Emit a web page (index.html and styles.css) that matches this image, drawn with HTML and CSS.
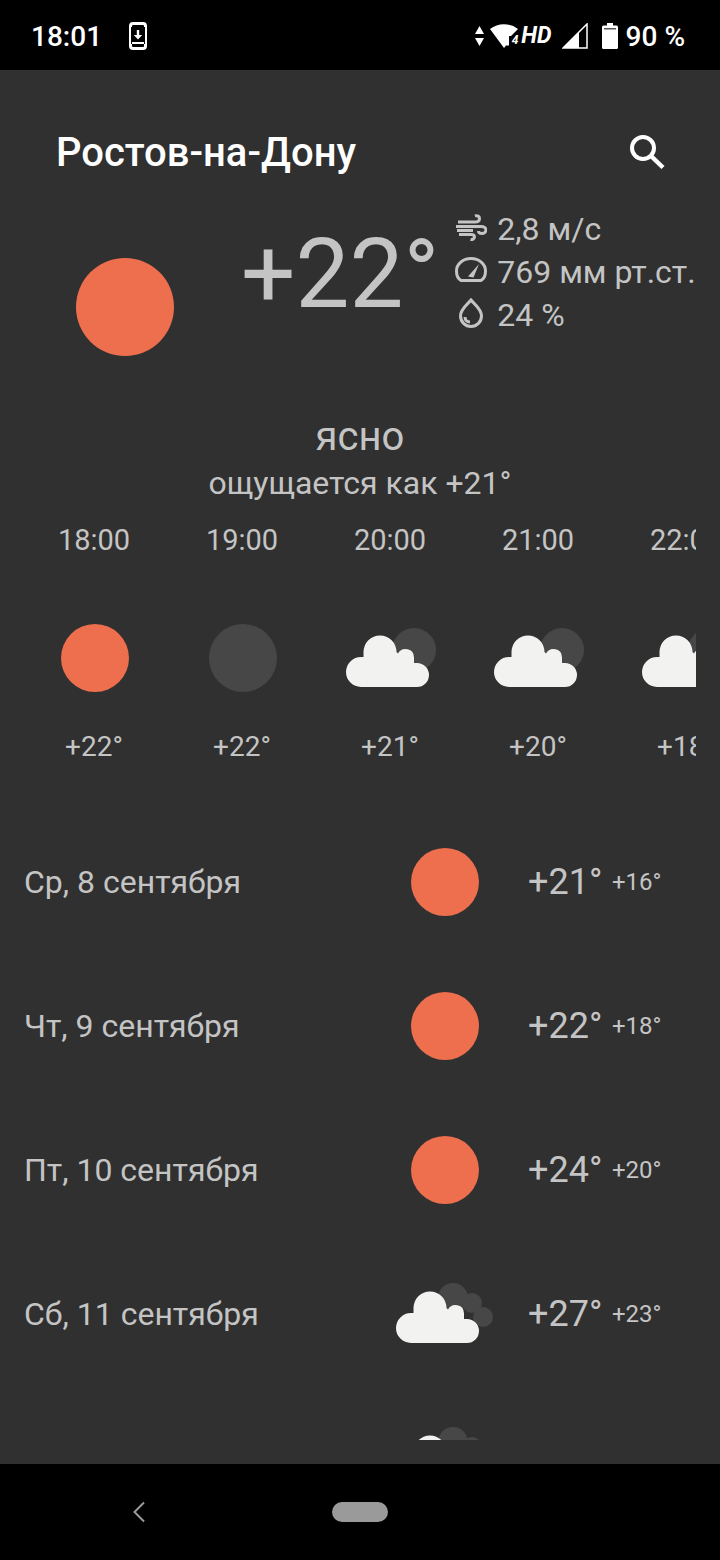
FILE: index.html
```html
<!DOCTYPE html>
<html lang="ru">
<head>
  <meta charset="UTF-8">
  <meta name="viewport" content="width=device-width, initial-scale=1.0">
  <title>Погода - Ростов-на-Дону</title>
  <link rel="stylesheet" href="styles.css">
</head>
<body>
  <!-- shared weather icons -->
  <svg class="defs" width="0" height="0">
    <defs>
      <path id="cloud" d="M19 77A15 15 0 0 1 19 47H21.500V42A16.500 16.500 0 0 1 54.500 42L56 43.500A8.500 8.500 0 0 1 72 47.500V53H75A12 12 0 0 1 75 77Z"/>
    </defs>
  </svg>

  <div id="status-bar">
    <span class="clock">18:01</span>
    <svg class="download-icon" width="18" height="28" viewBox="0 0 18 28">
      <rect x="1.500" y="1.500" width="15" height="25" rx="2.500" fill="none" stroke="#fff" stroke-width="3"/>
      <rect x="2" y="5" width="14" height="17" fill="#000"/>
      <rect x="3" y="20" width="12" height="2" fill="#fff"/>
      <path d="M7.800 8h2.400v5h3L9 17.500 4.800 13h3z" fill="#fff"/>
    </svg>
    <div class="status-right">
      <svg width="12" height="20" viewBox="0 0 12 20"><path d="M6.500 0L11 8H2zM2 12h9l-4.500 8z" fill="#fff"/></svg>
      <span class="wifi">
        <svg width="30" height="24" viewBox="0 0 30 24"><path d="M1 5C9 -1.500 21 -1.500 29 5L22 12H20V21.500H17L15 24z" fill="#fff"/></svg>
        <span class="wifi-num">4</span>
      </span>
      <span class="hd">HD</span>
      <svg class="signal-icon" width="26" height="26" viewBox="0 0 26 26">
        <path d="M25 1V25H1z" fill="none" stroke="#fff" stroke-width="1.500"/>
        <path d="M17 9V25H1z" fill="#fff"/>
      </svg>
      <svg class="battery-icon" width="16" height="26" viewBox="0 0 16 26">
        <path d="M5 0h6v2.500h3.500a1.500 1.500 0 0 1 1.500 1.500v20.500a1.500 1.500 0 0 1-1.500 1.500h-13A1.500 1.500 0 0 1 0 24.500V4a1.500 1.500 0 0 1 1.500-1.500H5z" fill="#fff"/>
        <rect x="2" y="5" width="12" height="1.500" fill="#555"/>
      </svg>
      <span class="battery-text">90 %</span>
    </div>
  </div>

  <div id="app">
    <header class="top">
      <h1>Ростов-на-Дону</h1>
      <svg class="search-icon" width="38" height="38" viewBox="0 0 38 38">
        <circle cx="15" cy="15" r="11" fill="none" stroke="#fff" stroke-width="4"/>
        <path d="M23 23L35 34.500" stroke="#fff" stroke-width="4.500" fill="none"/>
      </svg>
    </header>

    <section class="current">
      <div class="sun sun-big"></div>
      <div class="temp-now">+22°</div>
      <ul class="details">
        <li>
          <svg width="32" height="28" viewBox="0 0 32 28" class="detail-icon">
            <path d="M3 9h17c3 0 4.500-1.500 4.500-3.500S22.500 2 20 3"/>
            <path d="M1 13.500h25c3 0 5 1.500 5 3.500s-2 3.500-4 3.500-3.500-1-3.500-2.500"/>
            <path d="M2 17.500h16"/>
            <path d="M4 21.500h12c2 0 3.500 1 3.500 2.500s-2 3-4 2.500"/>
          </svg>
          2,8 м/с
        </li>
        <li>
          <svg width="32" height="26" viewBox="0 0 32 26" class="detail-icon">
            <path d="M6 23.500h20c2.500-1.500 4.500-5 4.500-9.500A14.500 12.500 0 0 0 1.500 14c0 4.500 2 8 4.500 9.500z"/>
            <path d="M13 19.500L24 7l-5.500 13.500z" class="needle"/>
          </svg>
          769 мм рт.ст.
        </li>
        <li>
          <svg width="32" height="30" viewBox="0 0 32 30" class="detail-icon">
            <path d="M16 2c4 5 10.500 9 10.500 16a10.500 10.500 0 0 1-21 0C5.500 11 12 7 16 2z"/>
            <path d="M10 19c0 3 2 5 5 5"/>
          </svg>
          24 %
        </li>
      </ul>
    </section>

    <div class="desc">ясно</div>
    <div class="feels">ощущается как +21°</div>

    <div class="hours">
      <div class="hour">
        <span class="hour-time">18:00</span>
        <div class="hour-icon"><div class="sun"></div></div>
        <span class="hour-temp">+22°</span>
      </div>
      <div class="hour">
        <span class="hour-time">19:00</span>
        <div class="hour-icon"><div class="sun moon"></div></div>
        <span class="hour-temp">+22°</span>
      </div>
      <div class="hour">
        <span class="hour-time">20:00</span>
        <div class="hour-icon">
          <svg class="weather-svg" width="96" height="96" viewBox="0 0 96 96">
            <circle cx="72" cy="40" r="22" fill="#474747"/>
            <use href="#cloud" fill="#f2f2f0"/>
          </svg>
        </div>
        <span class="hour-temp">+21°</span>
      </div>
      <div class="hour">
        <span class="hour-time">21:00</span>
        <div class="hour-icon">
          <svg class="weather-svg" width="96" height="96" viewBox="0 0 96 96">
            <circle cx="72" cy="40" r="22" fill="#474747"/>
            <use href="#cloud" fill="#f2f2f0"/>
          </svg>
        </div>
        <span class="hour-temp">+20°</span>
      </div>
      <div class="hour">
        <span class="hour-time">22:00</span>
        <div class="hour-icon">
          <svg class="weather-svg" width="96" height="96" viewBox="0 0 96 96">
            <circle cx="72" cy="40" r="22" fill="#474747"/>
            <use href="#cloud" fill="#f2f2f0"/>
          </svg>
        </div>
        <span class="hour-temp">+18°</span>
      </div>
    </div>

    <div class="days">
      <div class="day">
        <span class="day-name">Ср, 8 сентября</span>
        <div class="day-icon"><div class="sun"></div></div>
        <span class="day-high">+21°</span>
        <span class="day-low">+16°</span>
      </div>
      <div class="day">
        <span class="day-name">Чт, 9 сентября</span>
        <div class="day-icon"><div class="sun"></div></div>
        <span class="day-high">+22°</span>
        <span class="day-low">+18°</span>
      </div>
      <div class="day">
        <span class="day-name">Пт, 10 сентября</span>
        <div class="day-icon"><div class="sun"></div></div>
        <span class="day-high">+24°</span>
        <span class="day-low">+20°</span>
      </div>
      <div class="day">
        <span class="day-name">Сб, 11 сентября</span>
        <div class="day-icon">
          <svg class="weather-svg" width="106" height="96" viewBox="0 0 106 96">
            <circle cx="61" cy="32" r="15" fill="#474747"/>
            <circle cx="80" cy="37" r="10" fill="#474747"/>
            <circle cx="91" cy="51" r="10" fill="#474747"/>
            <use href="#cloud" fill="#f2f2f0"/>
          </svg>
        </div>
        <span class="day-high">+27°</span>
        <span class="day-low">+23°</span>
      </div>
      <!-- only the top of the icon shows above the fold -->
      <div class="day">
        <span class="day-name"></span>
        <div class="day-icon">
          <svg class="weather-svg" width="106" height="96" viewBox="0 0 106 96">
            <circle cx="61" cy="32" r="15" fill="#474747"/>
            <circle cx="80" cy="37" r="10" fill="#474747"/>
            <circle cx="91" cy="51" r="10" fill="#474747"/>
            <use href="#cloud" fill="#f2f2f0"/>
          </svg>
        </div>
      </div>
    </div>
  </div>

  <nav id="nav-bar">
    <svg class="back-icon" width="14" height="22" viewBox="0 0 14 22">
      <path d="M12 1.500L2.500 11l9.500 9.500" fill="none" stroke="#9a9a9a" stroke-width="2"/>
    </svg>
    <div class="home-pill"></div>
  </nav>
</body>
</html>
```

FILE: styles.css
```css
/* General */
html, body {
  margin: 0;
  padding: 0;
}

body {
  width: 720px;
  height: 1560px;
  overflow: hidden;
  display: flex;
  flex-direction: column;
  background: #000;
  font-family: Roboto, sans-serif;
  color: #c4c4c4;
}

.defs {
  position: absolute;
}

/* Status bar */
#status-bar {
  flex: 0 0 70px;
  box-sizing: border-box;
  display: flex;
  align-items: center;
  padding: 1px 35px 0 31px;
  color: #fff;
}

.clock {
  margin-top: 2px;
  font-size: 28px;
  font-weight: 500;
}

.download-icon {
  margin-left: 27px;
}

.status-right {
  margin-left: auto;
  display: flex;
  align-items: center;
}

.wifi {
  position: relative;
  display: flex;
  margin-left: 4px;
}

.wifi-num {
  position: absolute;
  right: 1px;
  bottom: 2px;
  font-size: 12px;
  font-weight: 700;
  font-style: italic;
  line-height: 12px;
}

.hd {
  margin-left: 2px;
  font-size: 23px;
  font-weight: 700;
  font-style: italic;
}

.signal-icon {
  margin-left: 10px;
}

.battery-icon {
  margin-left: 14px;
}

.battery-text {
  margin: 2px 0 0 8px;
  font-size: 28px;
  font-weight: 500;
}

/* Main */
#app {
  flex: 0 0 1370px;
  background: #303030;
  overflow: hidden;
}

#nav-bar {
  flex: 1;
  display: flex;
  align-items: center;
  padding-left: 132px;
  border-top: 24px solid #303030;
  box-sizing: border-box;
}

.top {
  display: flex;
  align-items: center;
  justify-content: space-between;
  height: 64px;
  margin-top: 50px;
  padding: 0 54px 0 56px;
}

h1 {
  margin: 0;
  font-size: 40px;
  font-weight: 500;
  color: #fff;
}

.current {
  display: flex;
  margin-top: 24px;
  padding-left: 76px;
}

.sun {
  width: 68px;
  height: 68px;
  border-radius: 50%;
  background: #ee6f4d;
}

.sun-big {
  flex: none;
  width: 98px;
  height: 98px;
  margin-top: 50px;
}

.moon {
  background: #474747;
}

.temp-now {
  margin-left: 67px;
  font-size: 96px;
  line-height: 132px;
}

.details {
  list-style: none;
  margin: -1px 0 0 16px;
  padding: 0;
  font-size: 32px;
}

.details li {
  display: flex;
  align-items: center;
  gap: 10px;
  height: 43px;
  white-space: nowrap;
}

.detail-icon {
  flex: none;
  margin-bottom: 4px;
  fill: none;
  stroke: #c4c4c4;
  stroke-width: 3;
}

.needle {
  fill: #c4c4c4;
  stroke: none;
}

.desc {
  margin-top: 57px;
  text-align: center;
  font-size: 40px;
  line-height: 48px;
}

.feels {
  text-align: center;
  font-size: 32px;
  line-height: 44px;
}

/* Hourly forecast */
.hours {
  display: flex;
  width: 676px;
  margin: 15px 0 0 20px;
  overflow: hidden;
}

.hour {
  flex: 0 0 148px;
  display: flex;
  flex-direction: column;
  align-items: center;
  font-size: 28px;
}

.hour-time {
  font-size: 29px;
  line-height: 40px;
}

.hour-icon {
  width: 68px;
  height: 96px;
  margin-top: 50px;
  display: flex;
  align-items: center;
  justify-content: center;
}

.hour-icon .sun {
  flex: none;
  margin-left: 2px;
}

.weather-svg {
  flex: none;
}

.hour-temp {
  margin-top: 21px;
  line-height: 40px;
}

/* Daily forecast */
.days {
  margin-top: 43px;
}

.day {
  display: flex;
  align-items: center;
  height: 144px;
  padding-left: 24px;
}

.day-name {
  width: 362px;
  font-size: 32px;
  white-space: nowrap;
}

.day-icon {
  flex: none;
  width: 68px;
  height: 96px;
  margin-left: 25px;
  margin-right: 49px;
  display: flex;
  align-items: center;
  justify-content: center;
}

.day-high {
  width: 84px;
  font-size: 36px;
}

.day-low {
  font-size: 24px;
}

/* Navigation bar */
.back-icon {
  flex: none;
}

.home-pill {
  width: 56px;
  height: 20px;
  margin-left: 186px;
  border-radius: 10px;
  background: #9a9a9a;
}
```
